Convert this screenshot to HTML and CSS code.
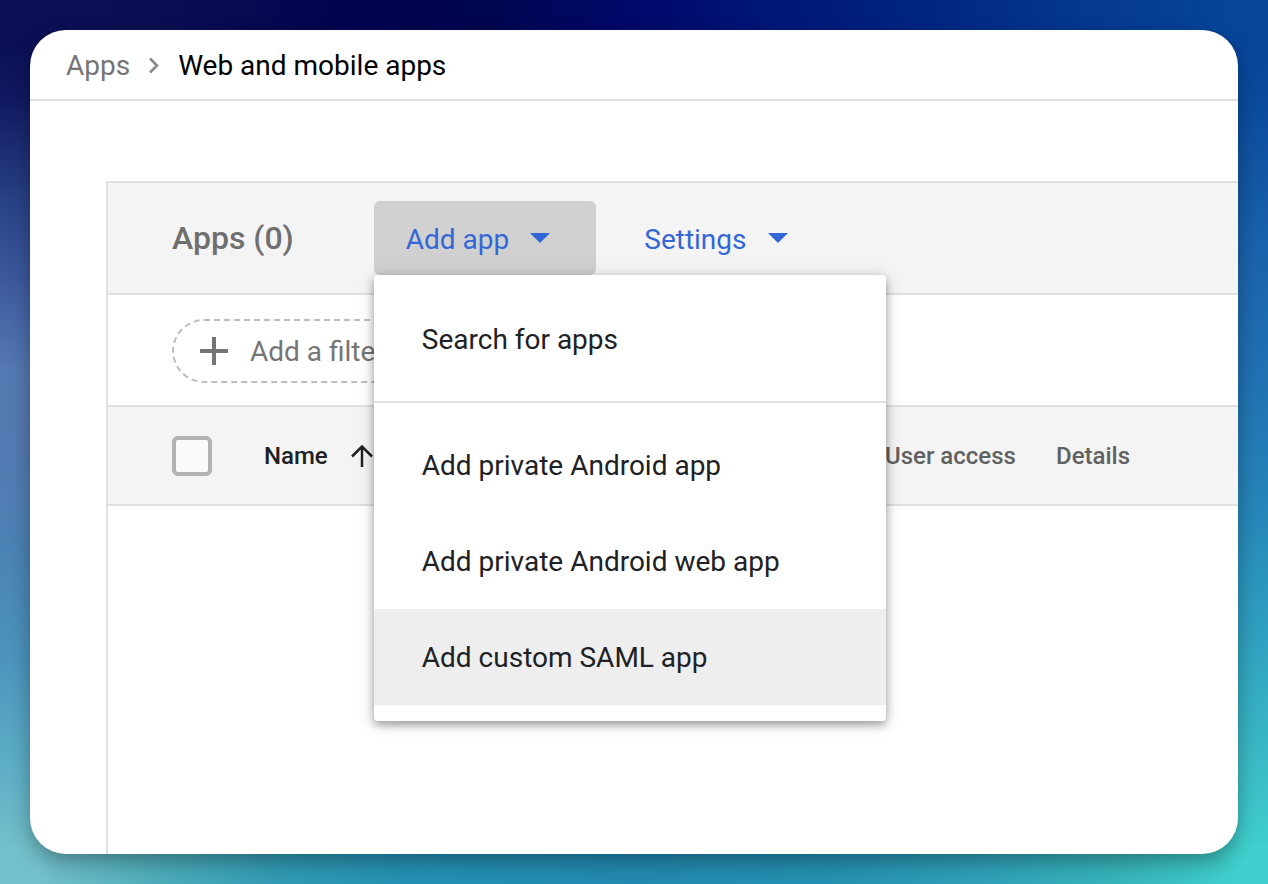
FILE: index.html
```html
<!DOCTYPE html>
<html lang="en">
<head>
<meta charset="utf-8">
<meta name="viewport" content="width=device-width, initial-scale=1">
<title>Web and mobile apps</title>
<link rel="stylesheet" href="styles.css">
</head>
<body class="backdrop">
<div class="window">
  <nav class="breadcrumb" aria-label="Breadcrumb">
    <a class="breadcrumb-link" href="#">Apps</a>
    <svg class="breadcrumb-chevron" width="12" height="18" viewBox="0 0 12 18" aria-hidden="true"><path d="M2 1.500l7 7-7 7" fill="none" stroke="currentColor" stroke-width="2.600"/></svg>
    <span class="breadcrumb-current" aria-current="page">Web and mobile apps</span>
  </nav>
  <main class="panel">
    <header class="toolbar">
      <h1 class="title">Apps (0)</h1>
      <div class="actions">
        <div class="dropdown">
          <button class="action action-open" type="button" aria-haspopup="menu" aria-expanded="true">Add app
            <svg class="caret" width="20" height="10" viewBox="0 0 20 10" aria-hidden="true"><path d="M0 0h20L10 10z" fill="currentColor"/></svg>
          </button>
          <div class="menu" role="menu">
            <button class="menu-item" type="button" role="menuitem">Search for apps</button>
            <hr class="menu-separator">
            <button class="menu-item" type="button" role="menuitem">Add private Android app</button>
            <button class="menu-item" type="button" role="menuitem">Add private Android web app</button>
            <button class="menu-item menu-item-active" type="button" role="menuitem">Add custom SAML app</button>
          </div>
        </div>
        <button class="action" type="button" aria-haspopup="menu">Settings
          <svg class="caret" width="20" height="10" viewBox="0 0 20 10" aria-hidden="true"><path d="M0 0h20L10 10z" fill="currentColor"/></svg>
        </button>
      </div>
    </header>
    <div class="filters">
      <button class="filter" type="button">
        <svg class="plus" width="28" height="28" viewBox="0 0 28 28" aria-hidden="true"><path d="M14 0v28M0 14h28" fill="none" stroke="currentColor" stroke-width="4"/></svg>
        Add a filter
      </button>
    </div>
    <table class="apps">
      <thead>
        <tr>
          <th class="col-select" scope="col"><input class="checkbox" type="checkbox" aria-label="Select all apps"></th>
          <th class="col-name" scope="col"><span class="sort">Name
            <svg width="22" height="22" viewBox="0 0 22 22" aria-hidden="true"><path d="M11 22V2M1 11.500L11 1.500l10 10" fill="none" stroke="currentColor" stroke-width="2.500"/></svg></span></th>
          <th class="col-access" scope="col">User access</th>
          <th class="col-details" scope="col">Details</th>
        </tr>
      </thead>
    </table>
  </main>
</div>
</body>
</html>
```
FILE: styles.css
```css
* { box-sizing: border-box; }

.backdrop {
  margin: 0;
  min-height: 100vh;
  padding: 30px;
  display: flex;
  font-family: Roboto, "Liberation Sans", sans-serif;
  font-size: 28px;
  line-height: 32px;
  background:
    linear-gradient(90deg, #0b1055 0%, #0b1055 3%, #0a0d52 14%, #03034f 27%, #00064f 38%, #00086a 50%, #001878 62%, #002481 72%, #04368d 84%, #06459a 97%) top / 100% 40px no-repeat,
    linear-gradient(90deg, #72c0cb 0%, #72c0cb 3%, #4fadba 12%, #319ab3 22%, #2490b3 32%, #2389b0 50%, #2590b1 65%, #30a1b8 78%, #37b3ba 88%, #40d0cd 98%) bottom / 100% 40px no-repeat,
    linear-gradient(180deg, #0b1055 0%, #0b1055 5%, #111960 11%, #294286 23%, #3d5a9d 32%, #5579b2 42%, #537bb3 53%, #4b82b5 62%, #4b93bd 74%, #5aaac4 85%, #72c0cb 96%) left / 50% 100% no-repeat,
    linear-gradient(180deg, #06459a 0%, #06459a 5%, #0b4b9d 12%, #1a62ab 28%, #2070b2 42%, #2583b8 56%, #2f9fc0 71%, #3ab8c5 85%, #40d0cd 96%) right / 50% 100% no-repeat;
}

.window {
  flex: 1;
  min-width: 0;
  display: flex;
  flex-direction: column;
  overflow: hidden;
  border-radius: 36px;
  background: #fff;
  box-shadow: 0 8px 20px rgba(0, 0, 0, 0.32);
}

.breadcrumb {
  display: flex;
  align-items: center;
  padding: 20px 36px 17px;
  border-bottom: 2px solid #e0e0e0;
  white-space: nowrap;
}

.breadcrumb-link { color: #757575; text-decoration: none; }
.breadcrumb-chevron { margin: 0 18px; color: #8a8a8a; }
.breadcrumb-current { color: #000; }

.panel {
  flex: 1;
  margin: 80px 0 0 76px;
  border: solid #e0e0e0;
  border-width: 2px 0 0 2px;
}

.toolbar {
  display: flex;
  align-items: center;
  gap: 80px;
  padding: 18px 64px;
  border-bottom: 2px solid #e0e0e0;
  background: #f4f4f4;
}

.title {
  margin: 0;
  color: #6f6f6f;
  font-size: 32px;
  font-weight: 500;
  line-height: 38px;
  white-space: nowrap;
}

.actions { display: flex; gap: 16px; }
.dropdown { position: relative; }

.action {
  display: flex;
  align-items: center;
  gap: 21px;
  height: 74px;
  padding: 4px 46px 0 32px;
  border: 0;
  border-radius: 6px;
  background: transparent;
  color: #3367d6;
  font: inherit;
  white-space: nowrap;
}

.action-open { background: #d0d0d0; }
.caret { margin-bottom: 4px; }

.menu {
  position: absolute;
  top: 100%;
  left: 0;
  z-index: 1;
  width: 512px;
  padding: 16px 0;
  border-radius: 4px;
  background: #fff;
  box-shadow: 0 4px 8px rgba(0, 0, 0, 0.3), 0 2px 18px rgba(0, 0, 0, 0.16);
}

.menu-item {
  display: block;
  width: 100%;
  padding: 33px 48px 31px;
  border: 0;
  background: transparent;
  color: #202124;
  font: inherit;
  text-align: left;
}

.menu-item-active { background: #eee; }

.menu-separator {
  height: 2px;
  margin: 14px 0;
  border: 0;
  background: #e0e0e0;
}

.filters {
  padding: 24px 64px 22px;
  border-bottom: 2px solid #e0e0e0;
}

.filter {
  display: flex;
  align-items: center;
  gap: 22px;
  height: 64px;
  padding: 2px 32px 0 26px;
  border: 2px dashed #bdbdbd;
  border-radius: 32px;
  background: transparent;
  color: #757575;
  font: inherit;
  white-space: nowrap;
}

.plus { margin-bottom: 2px; }

.apps {
  width: 100%;
  border-collapse: separate;
  border-spacing: 0;
  table-layout: fixed;
}

.apps th {
  height: 99px;
  padding: 0;
  border-bottom: 2px solid #e0e0e0;
  background: #f4f4f4;
  color: #616161;
  font-size: 24px;
  font-weight: 500;
  text-align: left;
  vertical-align: middle;
  white-space: nowrap;
}

.apps .col-select { width: 156px; padding-left: 64px; }
.apps .col-name { color: #202124; }
.col-access { width: 171px; }
.col-details { width: 182px; }

.sort { display: flex; align-items: center; gap: 23px; }

.checkbox {
  display: block;
  appearance: none;
  width: 40px;
  height: 40px;
  margin: 0;
  border: 4px solid #b2b2b2;
  border-radius: 6px;
  background: #fafafa;
}
```
